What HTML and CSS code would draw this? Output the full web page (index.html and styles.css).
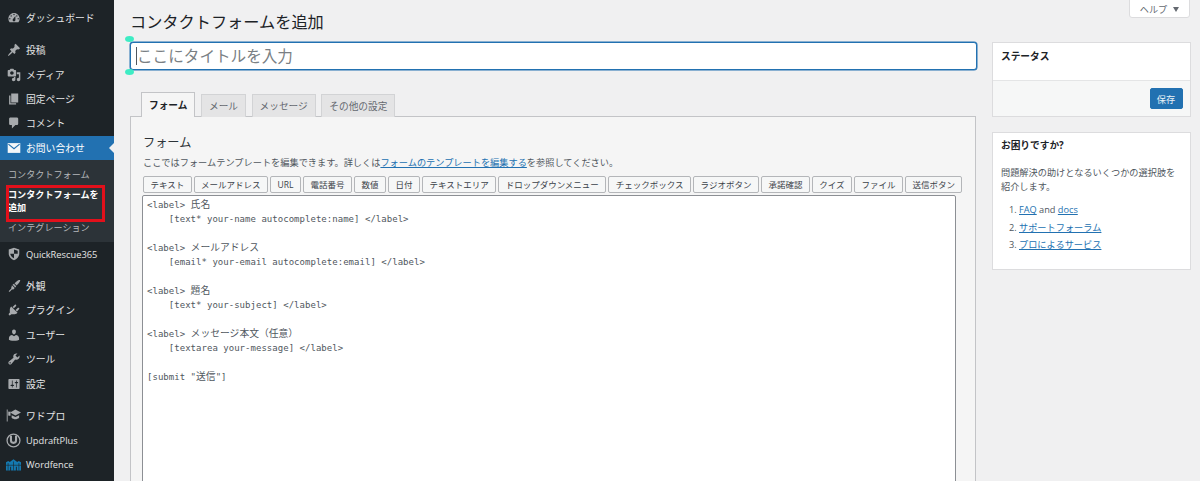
FILE: index.html
```html
<!DOCTYPE html>
<html lang="ja">
<head>
<meta charset="utf-8">
<title>コンタクトフォームを追加</title>
<link rel="stylesheet" href="styles.css">
</head>
<body>
<div class="app">
  <nav class="sidebar">
    <a class="item"><svg class="ico" viewBox="0 0 20 20"><path d="M3.76 16h12.48c1.1-1.37 1.76-3.11 1.76-5 0-4.42-3.58-8-8-8s-8 3.58-8 8c0 1.89.66 3.63 1.76 5zM10 4c.55 0 1 .45 1 1s-.45 1-1 1-1-.45-1-1 .45-1 1-1zM6 6c.55 0 1 .45 1 1s-.45 1-1 1-1-.45-1-1 .45-1 1-1zm8 0c.55 0 1 .45 1 1s-.45 1-1 1-1-.45-1-1 .45-1 1-1zm-5.37 5.55L12 7v6c0 1.1-.9 2-2 2s-2-.9-2-2c0-.57.24-1.08.63-1.45zM4 10c.55 0 1 .45 1 1s-.45 1-1 1-1-.45-1-1 .45-1 1-1zm12 0c.55 0 1 .45 1 1s-.45 1-1 1-1-.45-1-1 .45-1 1-1z"/></svg>ダッシュボード</a>
    <div class="sep"></div>
    <a class="item"><svg class="ico" viewBox="0 0 20 20"><path d="M10.44 3.02l1.82-1.82 6.36 6.35-1.83 1.82c-1.05-.68-2.48-.57-3.41.36l-.75.75c-.92.93-1.04 2.35-.35 3.41l-1.83 1.82-2.41-2.41-2.8 2.79c-.42.42-3.38 2.71-3.8 2.29s1.86-3.39 2.28-3.81l2.79-2.79L4.1 9.36l1.83-1.82c1.05.69 2.48.57 3.4-.36l.75-.75c.93-.92 1.05-2.35.36-3.41z"/></svg>投稿</a>
    <a class="item"><svg class="ico" viewBox="0 0 20 20"><path fill-rule="evenodd" d="M13 11V4c0-.55-.45-1-1-1h-1.67L9 1H5L3.67 3H2c-.55 0-1 .45-1 1v7c0 .55.45 1 1 1h10c.55 0 1-.45 1-1zM7 4.5c1.38 0 2.5 1.12 2.5 2.5S8.38 9.5 7 9.5 4.5 8.38 4.5 7 5.62 4.5 7 4.5zM14 6h5v10.5c0 1.38-1.12 2.5-2.5 2.5S14 17.88 14 16.5s1.12-2.5 2.5-2.5c.17 0 .34.02.5.05V9h-3V6zm-4 8.05V13h2v3.5c0 1.38-1.12 2.5-2.5 2.5S7 17.88 7 16.5 8.12 14 9.5 14c.17 0 .34.02.5.05z"/></svg>メディア</a>
    <a class="item"><svg class="ico" viewBox="0 0 20 20"><path d="M6 15V2h10v13H6zm-1 1h8v2H3V5h2v11z"/></svg>固定ページ</a>
    <a class="item"><svg class="ico" viewBox="0 0 20 20"><path d="M5 2h9c1.1 0 2 .9 2 2v7c0 1.1-.9 2-2 2h-2l-5 5v-5H5c-1.1 0-2-.9-2-2V4c0-1.1.9-2 2-2z"/></svg>コメント</a>
    <a class="item item-current"><svg class="ico ico-mail" viewBox="0 0 20 20"><path d="M1 3h18v14H1z"/><path class="mail-line" d="M2 4.500l8 6.500 8-6.500"/></svg>お問い合わせ<span class="arrow"></span></a>
    <div class="sub">
      <a class="sub-item">コンタクトフォーム</a>
      <a class="sub-item sub-current">コンタクトフォームを追加</a>
      <a class="sub-item">インテグレーション</a>
      <span class="highlight"></span>
    </div>
    <a class="item item-latin"><svg class="ico" viewBox="0 0 20 20"><path fill-rule="evenodd" d="M10 1l7.500 2.700v5.800c0 4.400-3.200 7.900-7.500 9.500-4.300-1.600-7.500-5.100-7.500-9.500V3.700zM10 3.500v6H4.700c.2 3 2.400 5.300 5.300 6.700v-6.700h5.300V5.400z"/></svg>QuickRescue365</a>
    <div class="sep"></div>
    <a class="item"><svg class="ico" viewBox="0 0 20 20"><path d="M19 1.500c-.3 1.700-1 3.200-2.300 4.500-1 1-1.800 1.900-2.800 3.300L10.700 6.100c1.400-1 2.300-1.800 3.300-2.800C15.300 2 17.300 1.300 19 1.500zM9.800 6.900l3.300 3.300-1.300 1.900-3.900-3.900zM7 9l4 4-1.500 1.500c-.6.6-1.500.7-2.200.3l-3 3.200-1.800.5.500-1.800 3.200-3c-.4-.7-.3-1.600.3-2.200z"/></svg>外観</a>
    <a class="item"><svg class="ico" viewBox="0 0 20 20"><path d="M13.11 4.36L9.87 7.6 8 5.73l3.24-3.24c.35-.34 1.05-.2 1.56.32.52.51.66 1.21.31 1.55zm-8 1.77l.91-1.12 9.01 9.01-1.19.84c-.71.71-2.63 1.16-3.82 1.16H6.14L4.9 17.26c-.59.59-1.54.59-2.12 0-.59-.58-.59-1.53 0-2.12l1.24-1.24v-3.88c0-1.13.4-3.19 1.09-3.89zm7.26 3.97l3.24-3.24c.34-.35 1.04-.21 1.55.31.52.51.66 1.21.31 1.56l-3.24 3.24z"/></svg>プラグイン</a>
    <a class="item"><svg class="ico" viewBox="0 0 20 20"><path d="M10 9.25c-2.27 0-2.73-3.44-2.73-3.44C7 4.02 7.82 2 9.97 2c2.16 0 2.98 2.02 2.71 3.81 0 0-.41 3.44-2.68 3.44zm0 2.57L12.72 10c2.39 0 4.52 2.33 4.52 4.53v2.49s-3.65 1.13-7.24 1.13c-3.65 0-7.24-1.13-7.24-1.13v-2.49c0-2.25 1.94-4.48 4.47-4.48z"/></svg>ユーザー</a>
    <a class="item"><svg class="ico" viewBox="0 0 20 20"><path fill-rule="evenodd" d="M16.68 9.77c-1.34 1.34-3.3 1.67-4.95.99l-5.41 6.52c-.99.99-2.59.99-3.58 0s-.99-2.59 0-3.57l6.52-5.42c-.68-1.65-.35-3.61.99-4.95 1.28-1.28 3.12-1.62 4.72-1.06l-2.89 2.89 2.82 2.82 2.86-2.87c.53 1.58.18 3.41-1.08 4.65zM3.81 16.21c.4.39 1.04.39 1.43 0 .4-.4.4-1.04 0-1.43-.39-.4-1.03-.4-1.43 0-.39.39-.39 1.03 0 1.43z"/></svg>ツール</a>
    <a class="item"><svg class="ico" viewBox="0 0 20 20"><path fill-rule="evenodd" d="M18 16V4c0-.55-.45-1-1-1H3c-.55 0-1 .45-1 1v12c0 .55.45 1 1 1h14c.55 0 1-.45 1-1zM8 11h1c.55 0 1 .45 1 1s-.45 1-1 1H8v1.5c0 .28-.22.5-.5.5s-.5-.22-.5-.5V13H6c-.55 0-1-.45-1-1s.45-1 1-1h1V5.5c0-.28.22-.5.5-.5s.5.22.5.5V11zm5-2h-1c-.55 0-1-.45-1-1s.45-1 1-1h1V5.500c0-.28.22-.5.5-.5s.5.22.5.5V7h1c.55 0 1 .45 1 1s-.45 1-1 1h-1v5.5c0 .28-.22.5-.5.5s-.5-.22-.5-.5V9z"/></svg>設定</a>
    <div class="sep"></div>
    <a class="item"><svg class="ico ico-lg" viewBox="0 0 20 20"><path d="M1 2h1.200v16H1z"/><path d="M3 4.500c1 .4 2 .5 3 .3v5.500c-1 .2-2 .1-3-.3z"/><path d="M12.500 2L20 6l-7.500 4L5.500 6z"/><path d="M7.500 9.500l5 2.600 5-2.600V13c-1.400 1.300-3.100 2-5 2s-3.600-.7-5-2z"/></svg>ワドプロ</a>
    <a class="item item-latin"><svg class="ico ico-lg" viewBox="0 0 20 20"><circle class="ring" cx="10" cy="10" r="8.600"/><path class="ring-u" d="M6.600 3.500v6.300a3.400 3.400 0 0 0 6.800 0V3.500"/></svg>UpdraftPlus</a>
    <a class="item item-latin"><svg class="ico ico-lg ico-wf" viewBox="0 0 20 20"><path d="M0 7l3-1.800L5 6.500 10 3l5 3.500 2-1.300L20 7v11h-5.600v-5h-1.200v5H6.800v-5H5.600v5H0z"/><path class="wf-line" d="M2.800 8v10M10 6v12M17.200 8v10M0 11h20"/></svg>Wordfence</a>
  </nav>

  <main class="main">
    <button class="help-tab" type="button">ヘルプ<span class="help-caret"></span></button>
    <h1 class="page-title">コンタクトフォームを追加</h1>
    <div class="columns">
      <div class="col-main">
        <div class="title-wrap">
          <input class="title-input" type="text" placeholder="ここにタイトルを入力">
          <span class="caret"></span>
          <span class="handle handle-top"></span>
          <span class="handle handle-bottom"></span>
        </div>
        <div class="tabs">
          <a class="tab tab-active">フォーム</a>
          <a class="tab">メール</a>
          <a class="tab">メッセージ</a>
          <a class="tab">その他の設定</a>
        </div>
        <section class="panel">
          <h2 class="panel-title">フォーム</h2>
          <p class="panel-desc">ここではフォームテンプレートを編集できます。詳しくは<a class="link">フォームのテンプレートを編集する</a>を参照してください。</p>
          <div class="tags">
            <button class="tag" type="button">テキスト</button>
            <button class="tag" type="button">メールアドレス</button>
            <button class="tag" type="button">URL</button>
            <button class="tag" type="button">電話番号</button>
            <button class="tag" type="button">数値</button>
            <button class="tag" type="button">日付</button>
            <button class="tag" type="button">テキストエリア</button>
            <button class="tag" type="button">ドロップダウンメニュー</button>
            <button class="tag" type="button">チェックボックス</button>
            <button class="tag" type="button">ラジオボタン</button>
            <button class="tag" type="button">承諾確認</button>
            <button class="tag" type="button">クイズ</button>
            <button class="tag" type="button">ファイル</button>
            <button class="tag" type="button">送信ボタン</button>
          </div>
<pre class="code">&lt;label&gt; <span class="cjk">氏名</span>
    [text* your-name autocomplete:name] &lt;/label&gt;

&lt;label&gt; <span class="cjk">メールアドレス</span>
    [email* your-email autocomplete:email] &lt;/label&gt;

&lt;label&gt; <span class="cjk">題名</span>
    [text* your-subject] &lt;/label&gt;

&lt;label&gt; <span class="cjk">メッセージ本文（任意）</span>
    [textarea your-message] &lt;/label&gt;

[submit "<span class="cjk">送信</span>"]</pre>
        </section>
      </div>
      <aside class="col-side">
        <div class="box">
          <h3 class="box-title box-title-status">ステータス</h3>
          <div class="box-foot"><button class="save" type="button">保存</button></div>
        </div>
        <div class="box box-help">
          <h3 class="box-title box-title-help">お困りですか?</h3>
          <p class="box-text">問題解決の助けとなるいくつかの選択肢を紹介します。</p>
          <ol class="box-list">
            <li><a class="link">FAQ</a> and <a class="link">docs</a></li>
            <li><a class="link">サポートフォーラム</a></li>
            <li><a class="link">プロによるサービス</a></li>
          </ol>
        </div>
      </aside>
    </div>
  </main>
</div>
</body>
</html>
```
FILE: styles.css
```css
* { box-sizing: border-box; }
html, body { margin: 0; height: 100%; overflow: hidden; }
body {
  background: #f0f0f1;
  color: #3c434a;
  font-family: "Open Sans", "Noto Sans CJK JP", sans-serif;
  font-size: 9.2px;
}
.app { display: flex; height: 481px; }

/* sidebar */
.sidebar {
  width: 114px;
  flex: none;
  background: #1d2327;
  padding-top: 6px;
  display: flex;
  flex-direction: column;
}
.item {
  position: relative;
  flex: none;
  height: 24.4px;
  display: flex;
  align-items: center;
  gap: 5px;
  padding-left: 7px;
  color: #e4e5e6;
  font-size: 9.8px;
  white-space: nowrap;
}
.item-latin { font-size: 9.3px; }
.ico { width: 14px; height: 14px; flex: none; fill: #a7aaad; }
.ico-lg { width: 15px; height: 15px; margin-left: -1px; }
.sep { flex: none; height: 7.6px; }
.item-current { background: #2271b1; color: #fff; }
.ico-mail { fill: #f4f6f8; }
.mail-line { fill: none; stroke: #2271b1; stroke-width: 1.6; }
.ring { fill: none; stroke: #a7aaad; stroke-width: 1.7; }
.ring-u { fill: none; stroke: #a7aaad; stroke-width: 2.8; }
.ico-wf { fill: #1479b0; }
.wf-line { fill: none; stroke: #1d2327; stroke-width: .8; }
.arrow {
  position: absolute;
  right: 0;
  top: 7px;
  border: 5px solid transparent;
  border-right: 5px solid #f0f0f1;
  border-left-width: 0;
}
.sub {
  position: relative;
  flex: none;
  background: #2c3338;
  padding: 4.7px 0 4.3px;
}
.sub-item {
  display: block;
  padding: 3.5px 8px;
  line-height: 13px;
  color: #b5b8bb;
  font-size: 9.1px;
}
.sub-current { color: #fff; font-weight: 700; }
.highlight {
  position: absolute;
  left: 5.5px;
  top: 25px;
  width: 99.5px;
  height: 37px;
  border: 3px solid #e2101b;
}

/* main */
.main { position: relative; flex: 1; min-width: 0; padding: 0 10px 0 16px; }
.help-tab {
  position: absolute;
  right: 10px;
  top: -1px;
  width: 61px;
  height: 19px;
  padding: 0;
  background: #fff;
  border: 1px solid #dcdcde;
  border-radius: 0 0 3px 3px;
  color: #646970;
  font: inherit;
  font-size: 9.2px;
}
.help-caret {
  display: inline-block;
  margin-left: 6px;
  vertical-align: 1px;
  border-top: 5px solid #646970;
  border-left: 3px solid transparent;
  border-right: 3px solid transparent;
}
.page-title {
  margin: 0;
  height: 42px;
  padding-top: 11px;
  color: #1d2327;
  font-size: 16.2px;
  font-weight: 400;
  line-height: 22px;
}
.columns { display: grid; grid-template-columns: 847px 199px; column-gap: 14px; }

.title-wrap { position: relative; height: 28px; }
.title-input {
  display: block;
  width: 100%;
  height: 28px;
  padding: 0 6px;
  background: #fff;
  border: 1.5px solid #2271b1;
  border-radius: 3px;
  box-shadow: 0 0 0 .5px #2271b1;
  outline: none;
  font-family: inherit;
  font-size: 15.6px;
}
.title-input::placeholder { color: #7a7f84; opacity: 1; }
.caret { position: absolute; left: 6px; top: 5px; width: 1px; height: 18px; background: #50575e; }
.handle { position: absolute; left: -5px; width: 9px; height: 6px; border-radius: 50%; background: #3eecc4; }
.handle-top { top: -6px; }
.handle-bottom { bottom: -5px; }

.tabs { display: flex; align-items: flex-end; gap: 5.5px; margin: 22px 0 -1px; padding-left: 11px; position: relative; z-index: 1; }
.tab {
  height: 23px;
  padding: 0 7px;
  display: flex;
  align-items: center;
  background: #e4e4e5;
  border: 1px solid #d2d3d5;
  border-bottom: 0;
  color: #646970;
  font-size: 9.7px;
}
.tab-active {
  height: 25px;
  background: #f5f5f5;
  border-color: #c3c4c7;
  color: #1d2327;
  font-weight: 700;
}
.panel {
  width: 846px;
  height: 367px;
  background: #f5f5f5;
  border: 1px solid #c3c4c7;
  padding: 0 12px;
}
.panel-title { margin: 0; padding-top: 17px; height: 39px; color: #2c3338; font-size: 12.2px; font-weight: 400; line-height: 18px; }
.panel-desc { margin: 0; height: 20px; color: #50575e; line-height: 14px; font-size: 9.2px; white-space: nowrap; }
.link { color: #2271b1; text-decoration: underline; }
.tags { display: flex; gap: 2.2px; width: 822px; }
.tag {
  flex: none;
  height: 17px;
  padding: 0 6.4px;
  background: #f6f7f7;
  border: 1px solid #b4b6b9;
  border-radius: 2px;
  color: #3c434a;
  font: inherit;
  font-size: 8.5px;
  line-height: 14px;
  white-space: nowrap;
}
.code {
  margin: 2px 0 0 -1px;
  width: 814px;
  height: 300px;
  padding: 1.7px 4px;
  background: #fff;
  border: 1px solid #8c8f94;
  border-radius: 2px;
  color: #50575e;
  font-family: "DejaVu Sans Mono", "Noto Sans CJK JP", monospace;
  font-size: 9px;
  letter-spacing: .03px;
  line-height: 14.33px;
}
.cjk { font-family: "Noto Sans CJK JP", sans-serif; font-size: 9.8px; letter-spacing: 0; line-height: 1; }

/* side */
.box {
  background: #fff;
  border: 1px solid #dcdcde;
  margin: 0 -.5px 0 .5px;
}
.box-title { margin: 0; padding: 7px 8.5px 0; color: #1d2327; font-size: 9.7px; font-weight: 700; line-height: 14px; }
.box-title-status { height: 37px; }
.box-title-help { padding-top: 6px; }
.box-foot { height: 36px; background: #f6f7f7; border-top: 1px solid #e4e5e6; display: flex; justify-content: flex-end; align-items: center; padding-right: 7px; }
.save { width: 33px; height: 21px; padding: 0; background: #2271b1; border: 1px solid #2271b1; border-radius: 2px; color: #e9f1f7; font: inherit; font-size: 9.2px; }
.box-help { margin-top: 14.5px; height: 138px; }
.box-text { margin: 13px 0 0; padding: 0 8.5px; color: #50575e; line-height: 14.6px; font-size: 9.2px; }
.box-list { margin: 6.5px 0 0; padding: 0 0 0 26.5px; color: #50575e; line-height: 17.6px; font-size: 9.2px; }
```
